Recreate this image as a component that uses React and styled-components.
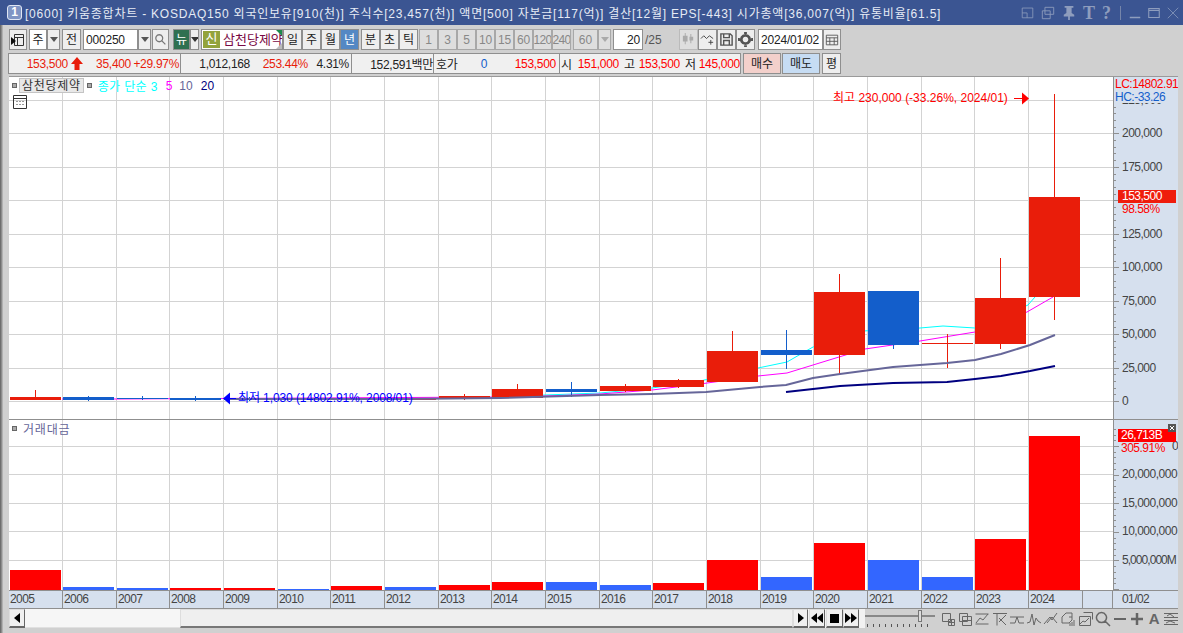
import React from 'react'
import styled, { createGlobalStyle } from 'styled-components'

const GlobalStyle = createGlobalStyle`
  html, body { margin: 0; padding: 0; background: #d0d0d0; }
  * { box-sizing: border-box; }
`

const FONT = `"Liberation Sans", "Noto Sans CJK KR", sans-serif`
const GRID = '#d3d3d3'
const AXIS = '#d6e0ee'
const CANDLE_RED = '#e91d0a'
const CANDLE_BLUE = '#135ecb'
const STEP = 53.65
const PLOT_W = 1104

const priceY = (v) => 401 - (v * 33.45) / 25000
const slot = (i) => Math.floor(STEP * i)
const gridXs = Array.from({ length: 19 }, (_, i) => slot(i + 1) + 0.5)
// polyline points are noted in page pixels, the pane starts at x=9
const toPane = (pts) => pts.split(' ').map((p) => {
  const [x, y] = p.split(',')
  return `${x - 9},${y}`
}).join(' ')

const candles = [
  { c: 'r', t: 397, b: 400, hi: 390, lo: 400 },
  { c: 'b', t: 397, b: 400, hi: 396, lo: 401 },
  { c: 'b', t: 398, b: 399, hi: 396, lo: 400 },
  { c: 'b', t: 398, b: 400, hi: 396, lo: 401 },
  { c: 'b', t: 398, b: 400, hi: 397, lo: 401 },
  { c: 'r', t: 399, b: 400, hi: 398, lo: 400 },
  { c: 'r', t: 399, b: 400, hi: 398, lo: 400 },
  { c: 'r', t: 398, b: 400, hi: 398, lo: 400 },
  { c: 'r', t: 396, b: 399, hi: 394, lo: 400 },
  { c: 'r', t: 389, b: 398, hi: 384, lo: 398 },
  { c: 'b', t: 389, b: 392, hi: 382, lo: 397 },
  { c: 'r', t: 386, b: 391, hi: 384, lo: 392 },
  { c: 'r', t: 380, b: 387, hi: 379, lo: 388 },
  { c: 'r', t: 351, b: 382, hi: 331, lo: 382 },
  { c: 'b', t: 350, b: 355, hi: 330, lo: 369 },
  { c: 'r', t: 292, b: 355, hi: 274, lo: 374 },
  { c: 'b', t: 291, b: 345, hi: 291, lo: 349 },
  { c: 'r', t: 343, b: 344, hi: 334, lo: 368 },
  { c: 'r', t: 298, b: 344, hi: 258, lo: 349 },
  { c: 'r', t: 197, b: 297, hi: 94, lo: 320 },
]

const volumes = [
  ['r', 570], ['b', 587], ['b', 588], ['r', 588], ['r', 588], ['b', 589], ['r', 586],
  ['b', 587], ['r', 585], ['r', 582], ['b', 582], ['b', 585], ['r', 583], ['r', 560],
  ['b', 577], ['r', 543], ['b', 560], ['b', 577], ['r', 539], ['r', 436],
]

const ma3 = '500,397 545,395 600,393 652,388 700,381 758,368 787,362 813,347 863,331 920,328 943,326 975,328 1028,305 1035,297'
const ma5 = '62,399 116,399 500,397 545,396 600,394 652,390 700,384 758,376 787,373 865,349 920,341 975,332 1027,312 1053,297'
const ma10 = '230,399 400,399 500,398 600,395 652,394 706,392 760,387 786,385 813,378 840,374 893,367 947,363 975,360 1001,354 1030,345 1055,335'
const ma20 = '786,392 813,389 840,386 893,383 947,382 975,379 1001,376 1030,371 1055,366'

const priceLabels = [225000, 200000, 175000, 150000, 125000, 100000, 75000, 50000, 25000, 0]
const volumeLabels = [
  [446, '25,000,000'], [474, '20,000,000'], [503, '15,000,000'], [531, '10,000,000'], [560, '5,000,000M'],
]
const years = Array.from({ length: 20 }, (_, i) => 2005 + i)

const Window = styled.div`
  width: 1183px;
  height: 633px;
  overflow: hidden;
  background: linear-gradient(90deg, #6e6e6e 0 1px, #8c8c8c 1px 2px, #b0b0b0 2px 3px, #d0d0d0 3px);
  font-family: ${FONT};
  font-size: 12px;
  color: #222;
  display: flex;
  flex-direction: column;
  position: relative;
`
const TitleBar = styled.div`
  height: 25px;
  background: #3b5592;
  color: #e6ebf5;
  display: flex;
  align-items: center;
  padding: 0 0 0 7px;
  flex: none;
`
const Badge = styled.span`
  width: 15px;
  height: 15px;
  border: 1px solid #dfe6f3;
  border-radius: 3px;
  background: #7f95c4;
  color: #fff;
  font-weight: bold;
  font-size: 12px;
  line-height: 13px;
  text-align: center;
  margin-right: 3px;
`
const TitleText = styled.span`
  flex: 1;
  font-size: 12px;
  letter-spacing: 0.78px;
  white-space: nowrap;
`
const TitleIcons = styled.div`
  display: flex;
  align-items: center;
  gap: 7px;
  padding-right: 4px;
  color: #8e9dbd;
`
const Separator = styled.span`
  width: 1px;
  height: 14px;
  background: #7585aa;
  margin: 0 1px 0 2px;
`
const ToolRow = styled.div`
  height: 21px;
  margin: ${(p) => p.$top}px 0 0 9px;
  display: flex;
  flex: none;
  align-items: stretch;
`
const Btn = styled.div`
  width: ${(p) => p.$w}px;
  margin-left: ${(p) => p.$gap || 0}px;
  background: ${(p) => p.$bg || '#eeeeee'};
  border: 1px solid ${(p) => p.$line || '#8f8f8f'};
  color: ${(p) => p.$color || '#222'};
  display: flex;
  align-items: center;
  justify-content: center;
  font-size: 12px;
  line-height: 1;
  letter-spacing: ${(p) => p.$track || 0}px;
  overflow: hidden;
  white-space: nowrap;
  flex: none;
`
const Field = styled(Btn)`
  background: #fff;
  justify-content: ${(p) => p.$align || 'flex-start'};
  padding: 0 2px;
  letter-spacing: -0.2px;
`
const Arrow = styled.i`
  width: 0;
  height: 0;
  border-left: 4px solid transparent;
  border-right: 4px solid transparent;
  border-top: 5px solid ${(p) => p.$color || '#555'};
`
const NameBox = styled(Btn)`
  background: #fff;
  justify-content: flex-start;
  padding-left: 1px;
  position: relative;
  color: #7a0a44;
  font-size: 13px;
`
const NewTag = styled.span`
  width: 17px;
  height: 17px;
  background: #93a33c;
  color: #fff;
  text-align: center;
  line-height: 16px;
  margin-right: 3px;
  flex: none;
`
const Corner = styled.i`
  position: absolute;
  right: 0;
  ${(p) => (p.$bottom ? 'bottom: 0;' : 'top: 0;')}
  width: 0;
  height: 0;
  border-left: 6px solid transparent;
  ${(p) => (p.$bottom ? 'border-bottom: 6px solid #bbb;' : 'border-top: 6px solid #1d8a4c;')}
`
const SlashText = styled.span`
  width: 20px;
  margin-left: 2px;
  color: #555;
  display: flex;
  align-items: center;
`
const QuoteGroup = styled.div`
  width: 733px;
  margin-left: -1px;
  background: #f0f0f0;
  border: 1px solid #8f8f8f;
  display: flex;
  flex: none;
  letter-spacing: -0.3px;
`
const QuoteCell = styled.div`
  width: ${(p) => p.$w}px;
  display: flex;
  align-items: center;
  border-right: ${(p) => (p.$end ? 'none' : '1px solid #8f8f8f')};
  flex: none;
  white-space: nowrap;
`
const Num = styled.span`
  color: ${(p) => p.$color || '#222'};
  width: ${(p) => p.$w}px;
  margin-left: ${(p) => p.$gap || 0}px;
  text-align: ${(p) => p.$align || 'right'};
  flex: none;
`
const QuoteArrow = styled.svg`
  margin-left: 2px;
  flex: none;
`
const ChartFrame = styled.div`
  margin: 2px 0 0 9px;
  width: 1169px;
  border-top: 1px solid #9a9a9a;
  flex: none;
  position: relative;
`
const Pane = styled.svg`
  display: block;
  width: 1169px;
  height: ${(p) => p.$h}px;
  background: #fff;
`
const AxisText = styled.text`
  font-family: ${FONT};
  font-size: 12px;
  letter-spacing: ${(p) => p.$track ?? -0.5}px;
  fill: ${(p) => p.$fill || '#444'};
`
const MarkerText = styled.text`
  font-family: ${FONT};
  font-size: 12px;
  letter-spacing: ${(p) => p.$track}px;
  fill: ${(p) => p.$fill};
`
const LegendRow = styled.div`
  position: absolute;
  left: 3px;
  top: ${(p) => p.$top}px;
  height: 15px;
  display: flex;
  align-items: center;
  font-size: 12px;
  white-space: nowrap;
`
const Dot = styled.i`
  width: 5px;
  height: 5px;
  background: #aaa;
  border: 1px solid #666;
  flex: none;
`
const NameChip = styled.span`
  background: #e8e8e8;
  border: 1px solid #c4c4c4;
  padding: 0 2px;
  margin: 0 3px 0 2px;
  height: 15px;
  line-height: 14px;
  color: #333;
  letter-spacing: 0.7px;
`
const LegendText = styled.span`
  color: ${(p) => p.$color};
  margin-left: ${(p) => p.$gap}px;
  letter-spacing: ${(p) => p.$track || 0}px;
`
const Calc = styled.svg`
  position: absolute;
  left: 4px;
  top: 18px;
`
const DateAxis = styled.div`
  height: 19px;
  display: flex;
  background: ${AXIS};
  border-top: 1px solid #8f8f8f;
  border-bottom: 1px solid #8f8f8f;
  color: #444;
  font-size: 12px;
  line-height: 17px;
  letter-spacing: -0.6px;
`
const DateCell = styled.div`
  width: ${(p) => p.$w}px;
  flex: none;
  border-right: 1px solid #8f8f8f;
  padding-left: 1px;
`
const DateEnd = styled.div`
  flex: 1;
  padding-left: 9px;
`
const ScrollRow = styled.div`
  margin-left: 9px;
  width: 1169px;
  height: 19px;
  display: flex;
  align-items: stretch;
  flex: none;
  background: #f2f2f2;
`
const ScrollBtn = styled.div`
  width: ${(p) => p.$w}px;
  margin-left: ${(p) => p.$gap || 0}px;
  background: #f0f0f0;
  border: 1px solid #ddd;
  border-right-color: #666;
  border-bottom: 2px solid #666;
  display: flex;
  align-items: center;
  justify-content: center;
  flex: none;
`
const Track = styled.div`
  width: 155px;
  background-color: #f6f6f6;
  background-image: radial-gradient(#e0e0e0 0.6px, transparent 0.7px);
  background-size: 2px 2px;
  border-bottom: 1px solid #e0e0e0;
  flex: none;
`
const Thumb = styled.div`
  width: 613px;
  background: #efefef;
  border: 1px solid #ddd;
  border-bottom: 2px solid #777;
  flex: none;
`
const Slider = styled.div`
  width: 70px;
  margin-left: 6px;
  position: relative;
  flex: none;
  background: #d0d0d0;
  &::before {
    content: '';
    position: absolute;
    left: 0;
    right: 0;
    top: 6px;
    height: 2px;
    background: #888;
  }
`
const Knob = styled.i`
  position: absolute;
  left: 53px;
  top: 1px;
  width: 4px;
  height: 12px;
  background: #ddd;
  border: 1px solid #777;
`
const Ticks = styled.i`
  position: absolute;
  left: 2px;
  right: 2px;
  bottom: 1px;
  height: 3px;
  background: repeating-linear-gradient(90deg, #555 0 1px, transparent 1px 6px);
`
const ScrollTools = styled.div`
  display: flex;
  align-items: center;
  gap: 1.2px;
  padding-left: 5px;
  color: #666;
  flex: 1;
  background: #d0d0d0;
`
const Title = styled.b`
  font-family: "Liberation Serif", serif;
  font-size: 18px;
  line-height: 1;
`
const Tri = styled.i`
  width: 0;
  height: 0;
  border-top: 5px solid transparent;
  border-bottom: 5px solid transparent;
  ${(p) => (p.$right ? 'border-left: 6px solid #000;' : 'border-right: 6px solid #000;')}
`
const StopMark = styled.i`
  width: 9px;
  height: 9px;
  background: #000;
`
const BoldA = styled.b`
  width: 16px;
  text-align: center;
  font-size: 15px;
  line-height: 1;
  color: #666;
`

const Glyph = ({ d, fill, size = 16, w = 1 }) => (
  <svg width={size} height={size} viewBox="0 0 16 16" fill={fill || 'none'} stroke={fill ? 'none' : 'currentColor'} strokeWidth={w}>
    <path d={d} />
  </svg>
)

const Chart = () => (
  <>
    <Pane $h={343} viewBox="0 77 1169 343">
      {priceLabels.map((v) => (
        <line key={v} x1="0" x2={PLOT_W} y1={Math.round(priceY(v)) + 0.5} y2={Math.round(priceY(v)) + 0.5} stroke={GRID} />
      ))}
      {gridXs.map((x) => (
        <line key={x} x1={x} x2={x} y1="77" y2="420" stroke={GRID} />
      ))}
      <polyline points={toPane(ma3)} fill="none" stroke="#00ffff" />
      <polyline points={toPane(ma5)} fill="none" stroke="#ff00ff" />
      {candles.map((k, i) => {
        const left = slot(i) + 1
        const color = k.c === 'r' ? CANDLE_RED : CANDLE_BLUE
        return (
          <g key={i}>
            <rect x={left + 25} y={k.hi} width="1" height={k.lo - k.hi} fill={color} />
            <rect x={left} y={k.t} width="51" height={k.b - k.t} fill={color} />
          </g>
        )
      })}
      <polyline points={toPane(ma10)} fill="none" stroke="#666699" strokeWidth="2" />
      <polyline points={toPane(ma20)} fill="none" stroke="#000080" strokeWidth="2" />

      <path d="M214 398.5l7-6v12z" fill="#0000ff" />
      <rect x="220" y="398" width="7" height="1" fill="#0000ff" />
      <MarkerText x="229" y="402" $fill="#0000ff" $track={-0.1}>최저 1,030 (14802.91%, 2008/01)</MarkerText>
      <MarkerText x="824" y="102" $fill="#ff0000" $track={0}>최고 230,000 (-33.26%, 2024/01)</MarkerText>
      <rect x="1005" y="98" width="9" height="1" fill="#ff0000" />
      <path d="M1013 92.5l7 6-7 6z" fill="#ff0000" />

      <rect x={PLOT_W} y="77" width="65" height="343" fill={AXIS} />
      <line x1={PLOT_W + 0.5} x2={PLOT_W + 0.5} y1="77" y2="420" stroke="#8f8f8f" />
      {Array.from({ length: 50 }, (_, i) => {
        const y = Math.round(priceY(i * 5000))
        return y < 77 ? null : <line key={i} x1={PLOT_W} x2={PLOT_W + (i % 5 === 0 ? 6 : 3)} y1={y + 0.5} y2={y + 0.5} stroke="#8f8f8f" />
      })}
      {priceLabels.filter((v) => v !== 150000).map((v) => (
        <AxisText key={v} x="1113" y={priceY(v) + 4}>{v.toLocaleString('en-US')}</AxisText>
      ))}
      <rect x={PLOT_W + 1} y="77" width="64" height="26" fill={AXIS} />
      <AxisText x="1106" y="88" $fill="#ff0000">LC:14802.91</AxisText>
      <AxisText x="1106" y="101" $fill="#135ecb">HC:-33.26</AxisText>
      <rect x="1109" y="190" width="58" height="13" fill="#ef1c0c" />
      <AxisText x="1113" y="200" $fill="#fff">153,500</AxisText>
      <AxisText x="1113" y="213" $fill="#ff0000">98.58%</AxisText>
      <line x1="0" x2="1169" y1="419.5" y2="419.5" stroke="#8f8f8f" />
    </Pane>
    <Pane $h={170} viewBox="0 420 1169 170">
      {volumeLabels.map(([y]) => (
        <line key={y} x1="0" x2={PLOT_W} y1={y + 0.5} y2={y + 0.5} stroke={GRID} />
      ))}
      {gridXs.map((x) => (
        <line key={x} x1={x} x2={x} y1="420" y2="590" stroke={GRID} />
      ))}
      {volumes.map(([c, top], i) => (
        <rect key={i} x={slot(i) + 1} y={top} width="51" height={590 - top} fill={c === 'r' ? '#ff0000' : '#3366ff'} />
      ))}
      <rect x={PLOT_W} y="420" width="65" height="170" fill={AXIS} />
      <line x1={PLOT_W + 0.5} x2={PLOT_W + 0.5} y1="420" y2="590" stroke="#8f8f8f" />
      {Array.from({ length: 30 }, (_, i) => {
        const y = Math.round(589 - i * 5.72)
        return y < 425 ? null : <line key={i} x1={PLOT_W} x2={PLOT_W + (i % 5 === 0 ? 6 : 3)} y1={y + 0.5} y2={y + 0.5} stroke="#8f8f8f" />
      })}
      {volumeLabels.slice(1).map(([y, label]) => (
        <AxisText key={y} x="1113" y={y + 4} $track={label.endsWith('M') ? -0.95 : -0.5}>{label}</AxisText>
      ))}
      <AxisText x="1163" y="450">0</AxisText>
      <rect x="1109" y="429" width="58" height="13" fill="#ff0000" />
      <AxisText x="1112" y="439" $fill="#fff">26,713B</AxisText>
      <AxisText x="1112" y="452" $fill="#ff0000">305.91%</AxisText>
      <rect x="1159" y="424" width="8" height="8" fill="#555" />
      <path d="M1161 426l4 4m0-4l-4 4" stroke="#fff" />
    </Pane>
  </>
)

const App = () => (
  <Window>
    <GlobalStyle />
    <TitleBar>
      <Badge>1</Badge>
      <TitleText>[0600] 키움종합차트 - KOSDAQ150 외국인보유[910(천)] 주식수[23,457(천)] 액면[500] 자본금[117(억)] 결산[12월] EPS[-443] 시가총액[36,007(억)] 유통비율[61.5]</TitleText>
      <TitleIcons>
        <Glyph size={13} d="M1.5 2.5h13v12h-13zM1.5 8.5h6v6" />
        <Glyph size={14} d="M4.5 1.5h10v8h-10zM1.5 5.5h9v9h-9z" />
        <Glyph size={14} fill="#8e9dbd" d="M3 0h10v2h-2v6l3 2v2H9v4H7v-4H2v-2l3-2V2H3z" />
        <Title>T</Title>
        <Title>?</Title>
        <Separator />
        <Glyph size={12} w={2} d="M1 14h14" />
        <Glyph size={12} w={1.4} d="M1 2h14v12H1zM1 4.5h14" />
        <Glyph size={12} d="M1 1l14 14M15 1L1 15" />
      </TitleIcons>
    </TitleBar>

    <ToolRow $top={4}>
      <Btn $w={18}>
        <svg width="14" height="14" viewBox="0 0 14 14">
          <path d="M3.5 1.5h9v11h-9zM3.5 4.5h9M6.5 4.5v8" fill="none" stroke="#333" />
          <path d="M0 4l5 4-5 4z" fill="#111" />
        </svg>
      </Btn>
      <Btn $w={18} $gap={2} $bg="#fff">주</Btn>
      <Btn $w={13}><Arrow /></Btn>
      <Btn $w={19} $gap={2}>전</Btn>
      <Field $w={55} $gap={2}>000250</Field>
      <Btn $w={13}><Arrow /></Btn>
      <Btn $w={17} $gap={1} $color="#777"><Glyph size={14} w={1.5} d="M6 2a4 4 0 1 1-.01 0zM9 9l4 4" /></Btn>
      <Btn $w={17} $gap={4} $bg="#2f7050" $color="#fff">뉴</Btn>
      <Btn $w={9}><Arrow $color="#333" /></Btn>
      <NameBox $w={82} $gap={2}>
        <NewTag>신</NewTag>삼천당제약
        <Corner />
        <Corner $bottom />
      </NameBox>
      {['일', '주', '월'].map((t) => <Btn key={t} $w={19}>{t}</Btn>)}
      <Btn $w={19} $bg="#5488c4" $color="#fff">년</Btn>
      <Btn $w={19} $gap={2}>분</Btn>
      <Btn $w={19}>초</Btn>
      <Btn $w={19}>틱</Btn>
      {['1', '3', '5', '10', '15', '60', '120', '240'].map((t, i) => (
        <Btn key={t} $w={19} $gap={i === 0 ? 1 : 0} $color="#888" $line="#a8a8a8" $bg="#dedede" $track={t.length > 2 ? -0.7 : -0.2}>{t}</Btn>
      ))}
      <Btn $w={25} $gap={2} $color="#888" $line="#a8a8a8" $bg="#dedede">60</Btn>
      <Btn $w={13} $line="#a8a8a8" $bg="#dedede"><Arrow $color="#aaa" /></Btn>
      <Field $w={30} $gap={2} $align="flex-end">20</Field>
      <SlashText>/25</SlashText>
      <Btn $w={19} $gap={14} $bg="#dedede" $line="#bbb" $color="#aaa"><Glyph size={15} fill="#aaa" d="M2 4h2V1h1v3h2v6H5v3H4v-3H2zM9 5h1V2h1v3h2v4h-2v3h-1V9H9z" /></Btn>
      <Btn $w={19} $color="#444"><Glyph size={15} d="M1 7l3-3 3 3 3-3 4 3M9 11h5M11.5 8.5v5" /></Btn>
      <Btn $w={19} $color="#555"><Glyph size={15} w={1.5} d="M2 2h10l2 2v10H2zM5 2v4h6V2M5 14V9h6v5" /></Btn>
      <Btn $w={19} $color="#555"><Glyph size={15} w={3} d="M8 3.5a4.5 4.5 0 1 1-.01 0zM8 0v2M8 14v2M0 8h2M14 8h2" /></Btn>
      <Field $w={65} $gap={3}>2024/01/02</Field>
      <Btn $w={18} $color="#555"><Glyph size={14} d="M1.5 2.5h13v11h-13zM1.5 5.5h13M1.5 9.5h13M5.5 5.5v8M10.5 5.5v8" /></Btn>
    </ToolRow>

    <ToolRow $top={3}>
      <QuoteGroup>
        <QuoteCell $w={172}>
          <Num $w={59} $color="#e81c0a">153,500</Num>
          <QuoteArrow width="14" height="13" viewBox="0 0 14 13"><path d="M7 0l6 7H9.5v6h-5V7H1z" fill="#e81c0a" /></QuoteArrow>
          <Num $w={47} $color="#e81c0a">35,400</Num>
          <Num $w={48} $color="#e81c0a">+29.97%</Num>
        </QuoteCell>
        <QuoteCell $w={171}>
          <Num $w={69}>1,012,168</Num>
          <Num $w={58} $color="#e81c0a">253.44%</Num>
          <Num $w={41}>4.31%</Num>
        </QuoteCell>
        <QuoteCell $w={82}>
          <Num $w={81}>152,591백만</Num>
        </QuoteCell>
        <QuoteCell $w={126}>
          <Num $w={24} $gap={2} $align="left">호가</Num>
          <Num $w={27} $color="#135ecb">0</Num>
          <Num $w={69} $color="#ff0000">153,500</Num>
        </QuoteCell>
        <QuoteCell $w={180} $end>
          <Num $w={11} $gap={1} $align="left">시</Num>
          <Num $w={47} $color="#ff0000">151,000</Num>
          <Num $w={12} $gap={5} $align="left">고</Num>
          <Num $w={44} $color="#ff0000">153,500</Num>
          <Num $w={12} $gap={5} $align="left">저</Num>
          <Num $w={43} $color="#ff0000">145,000</Num>
        </QuoteCell>
      </QuoteGroup>
      <Btn $w={38} $gap={2} $bg="#f3d0cb">매수</Btn>
      <Btn $w={38} $gap={1} $bg="#c6dcf3">매도</Btn>
      <Btn $w={19} $gap={2}>평</Btn>
    </ToolRow>

    <ChartFrame>
      <Chart />
      <LegendRow $top={1}>
        <Dot />
        <NameChip>삼천당제약</NameChip>
        <Dot />
        <LegendText $color="#00ffff" $gap={6} $track={0.35}>종가 단순 3</LegendText>
        <LegendText $color="#ff00ff" $gap={8}>5</LegendText>
        <LegendText $color="#666699" $gap={7}>10</LegendText>
        <LegendText $color="#000080" $gap={8}>20</LegendText>
      </LegendRow>
      <Calc width="14" height="14" viewBox="0 0 14 14" fill="none" stroke="#333">
        <path d="M.5.5h13v13H.5zM.5 3.5h13M3.5 6.5h1M6.5 6.5h1M9.5 6.5h1M3.5 9.5h1M6.5 9.5h1M9.5 9.5h1" />
      </Calc>
      <LegendRow $top={344}>
        <Dot />
        <LegendText $color="#666699" $gap={6} $track={0.8}>거래대금</LegendText>
      </LegendRow>
      <DateAxis>
        {years.map((y, i) => (
          <DateCell key={y} $w={slot(i + 1) - slot(i) + (i === 0 ? 1 : 0)}>{y}</DateCell>
        ))}
        <DateCell $w={PLOT_W - slot(20) - 1} />
        <DateEnd>01/02</DateEnd>
      </DateAxis>
    </ChartFrame>

    <ScrollRow>
      <ScrollBtn $w={16}><Tri /></ScrollBtn>
      <Track />
      <Thumb />
      <ScrollBtn $w={15}><Tri $right /></ScrollBtn>
      <ScrollBtn $w={16} $gap={1}><Tri /><Tri /></ScrollBtn>
      <ScrollBtn $w={17} $gap={1}><StopMark /></ScrollBtn>
      <ScrollBtn $w={16}><Tri $right /><Tri $right /></ScrollBtn>
      <Slider><Knob /><Ticks /></Slider>
      <ScrollTools>
        <Glyph d="M2.5 2.5h8v8h-8zM8.5 8.5h6v6h-6zM11.5 8.5v6M8.5 11.5h6" />
        <Glyph d="M2.5 2.5h8v8h-8zM5.5 5.5h9v9h-9zM5.5 9.5h9" />
        <Glyph d="M1.5 3h13M1.5 13h13M2 12l4-5 3 2 5-6" />
        <Glyph d="M1 2.5h14M5 2.5v12M7 11l7-7M14 14L7 7" />
        <Glyph d="M1 12h5l2-6 2 6h5M1 6h14" />
        <Glyph d="M1 12l3-1 2-8 2 11 2-7 2 3 3 2" />
        <Glyph d="M1 13l6-7 2 3 5-7M4 12l5-6 5 6" />
        <Glyph d="M2 6l4-4h6v7l-3 3H2zM9 6h3M10 15v-3M12 15v-4M14 15V9" />
        <Glyph d="M5.5 1.5h9v7M1.5 5.5h11v9h-11zM2 13l3-3 2 1 4-4" />
        <Glyph w={1.5} d="M6.5 1.5a5 5 0 1 1-.01 0zM10 10l5 5" />
        <Glyph w={2} d="M2 8h12" />
        <Glyph w={2.5} d="M2 8h12M8 2v12" />
        <BoldA>A</BoldA>
        <Glyph d="M1 2.5h14M1 6.5h14M1 9.5h14M1 13.5h14M4 5l3-2 4 3M3 12l4-2 5 2" />
      </ScrollTools>
    </ScrollRow>
  </Window>
)

export default App
